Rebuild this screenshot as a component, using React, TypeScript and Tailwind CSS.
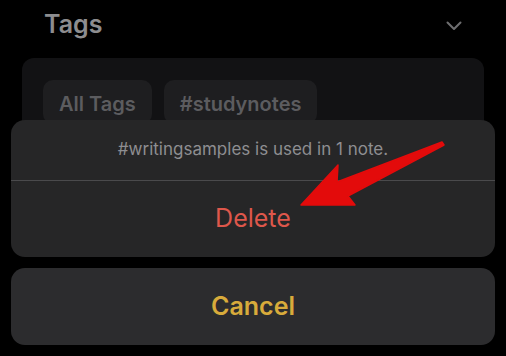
export default function App() {
  return (
    <div className="relative w-[506px] h-[356px] overflow-hidden bg-black font-['Inter','Liberation_Sans',sans-serif]">
      {/* Background page */}
      <div className="flex items-center justify-between pl-[44px] pr-[44px] pt-[8px]">
        <h1 className="text-[25px] leading-[32px] font-semibold text-[#8d8d8f]">Tags</h1>
        <svg width="16" height="10" viewBox="0 0 16 10" className="mt-[4px]">
          <path d="M1.5 1.5 L8 8 L14.5 1.5" fill="none" stroke="#6e6e70" strokeWidth="2" strokeLinecap="round" strokeLinejoin="round" />
        </svg>
      </div>
      <div className="mx-[22px] mt-[18px] h-[120px] rounded-[12px] bg-[#121214] px-[21px] pt-[22px]">
        <div className="flex gap-[12px]">
          <div className="h-[44px] rounded-[10px] bg-[#1e1e20] px-[16px] pt-[9px] text-[20px] font-semibold text-[#5c5c5f]">All Tags</div>
          <div className="h-[44px] rounded-[10px] bg-[#1e1e20] px-[16px] pt-[9px] text-[20px] font-semibold text-[#5c5c5f]">#studynotes</div>
        </div>
      </div>

      {/* Action sheet overlay */}
      <div className="absolute left-[11px] right-[11px] bottom-[11px] flex flex-col gap-[11px]">
        <div className="rounded-[14px] bg-[#262627] overflow-hidden">
          <div className="h-[60px] flex items-center justify-center text-[17px] text-[#8e8e91]">
            #writingsamples is used in 1 note.
          </div>
          <div className="h-px bg-[#4a4a4c]" />
          <div className="h-[76px] flex items-center justify-center text-[25px] text-[#de574b]">Delete</div>
        </div>
        <div className="h-[77px] rounded-[14px] bg-[#2c2c2e] flex items-center justify-center text-[25px] font-semibold text-[#d8ab3b]">
          Cancel
        </div>
      </div>

      {/* Annotation arrow */}
      <svg className="absolute left-0 top-0" width="506" height="356" viewBox="0 0 506 356">
        <path
          d="M301 205 L338 165 L337 182 L442 142 L444 145 L348 196 L355 205 Z"
          fill="#e30b0b"
          stroke="#e30b0b"
          strokeWidth="1.5"
          strokeLinejoin="round"
        />
      </svg>
    </div>
  );
}
